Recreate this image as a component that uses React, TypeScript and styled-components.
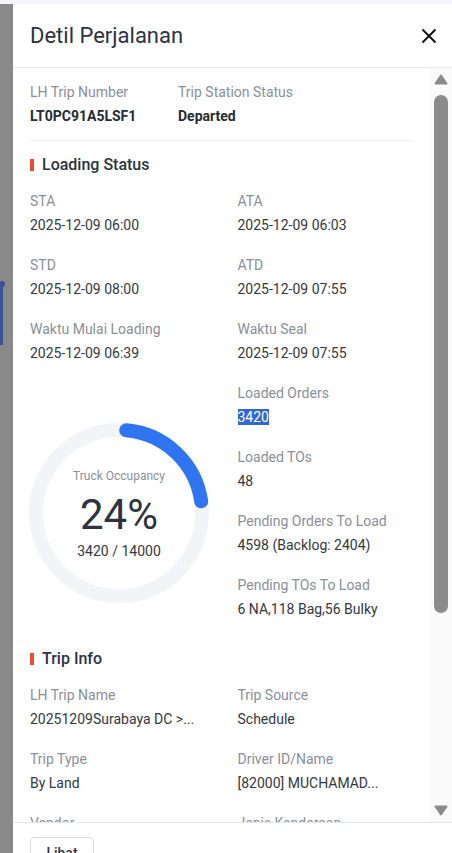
import React from 'react';
import styled, { createGlobalStyle } from 'styled-components';

const GlobalStyle = createGlobalStyle`
  html, body {
    margin: 0;
    padding: 0;
    background: #f4f4f9;
  }

  body {
    font-family: Roboto, "Noto Sans", Arial, sans-serif;
    -webkit-font-smoothing: antialiased;
  }
`

const Page = styled.div`
  width: 452px;
  height: 853px;
  overflow: hidden;
  display: flex;
  flex-direction: column;
`

const TopBand = styled.div`
  height: 4px;
  flex-shrink: 0;
  background: #f4f4f9;
`

const Main = styled.div`
  flex: 1;
  display: flex;
  min-height: 0;
`

// dimmed page behind the drawer
const Backdrop = styled.div`
  width: 13px;
  flex-shrink: 0;
  background: #898989;
  display: flex;
  flex-direction: column;
  padding-top: 277px;
`

const BackdropDot = styled.div`
  width: 6px;
  height: 6px;
  margin-left: -1px;
  border-radius: 50%;
  background: #3b5298;
`

const BackdropBar = styled.div`
  width: 3px;
  height: 58px;
  background: #3b5298;
`

const Drawer = styled.div`
  flex: 1;
  display: flex;
  flex-direction: column;
  background: #ffffff;
  min-width: 0;
`

const Header = styled.div`
  height: 64px;
  box-sizing: border-box;
  flex-shrink: 0;
  display: flex;
  align-items: center;
  justify-content: space-between;
  padding: 0 15px 0 17px;
  border-bottom: 1px solid #e8e9ef;
`

const Title = styled.h1`
  margin: 0;
  font-size: 22px;
  font-weight: 400;
  color: #2c3341;
  letter-spacing: 0;
`

const CloseButton = styled.button`
  width: 16px;
  height: 16px;
  padding: 0;
  border: none;
  background: none;
  display: flex;
  align-items: center;
  justify-content: center;
  cursor: pointer;
`

const Body = styled.div`
  height: 754px;
  flex-shrink: 0;
  display: flex;
  overflow: hidden;
`

const Content = styled.div`
  flex: 1;
  padding: 0 17px;
  overflow: hidden;
`

const TopInfo = styled.div`
  display: grid;
  grid-template-columns: 148px 1fr;
  padding: 13px 0;
  border-bottom: 1px solid #eef0f4;
`

const Section = styled.section<{ top: number }>`
  padding-top: ${p => p.top}px;
`

const SectionTitle = styled.h2`
  margin: 0 0 13px;
  display: flex;
  align-items: center;
  gap: 8px;
  font-size: 16px;
  line-height: 24px;
  font-weight: 500;
  color: #2c3341;

  &::before {
    content: '';
    width: 4px;
    height: 12px;
    background: #ee4d2d;
  }
`

const Grid = styled.div`
  display: grid;
  grid-template-columns: minmax(0, 1fr) minmax(0, 1fr);
  column-gap: 32px;
  row-gap: 18px;
`

const Field = styled.div<{ side?: boolean }>`
  min-width: 0;
  grid-column: ${p => (p.side ? '2' : 'auto')};
`

const Label = styled.div`
  font-size: 14px;
  line-height: 22px;
  color: #8a8f99;
  white-space: nowrap;
`

const Value = styled.div<{ bold?: boolean }>`
  margin-top: 2px;
  font-size: 14px;
  line-height: 22px;
  color: ${p => (p.bold ? '#262b35' : '#333840')};
  font-weight: ${p => (p.bold ? 700 : 400)};
  white-space: nowrap;
`

const Selected = styled.span`
  background: #3467d6;
  color: #ffffff;
`

const ChartCell = styled.div`
  grid-column: 1;
  grid-row: span 4;
  padding-top: 41px;
`

const Gauge = styled.div`
  position: relative;
  width: 180px;
  height: 180px;
  margin-left: -1px;

  & > svg {
    position: absolute;
    inset: 0;
  }
`

const GaugeText = styled.div`
  position: relative;
  display: flex;
  flex-direction: column;
  align-items: center;
  padding-top: 45px;
`

const GaugeLabel = styled.div`
  font-size: 12px;
  line-height: 16px;
  color: #8a8f99;
`

const GaugePercent = styled.div`
  margin-top: 7px;
  font-size: 42px;
  line-height: 48px;
  color: #2c3341;
`

const GaugeSub = styled.div`
  margin-top: 2px;
  font-size: 14px;
  line-height: 20px;
  color: #333840;
`

const ScrollTrack = styled.div`
  width: 22px;
  flex-shrink: 0;
  background: #fafafa;
  display: flex;
  flex-direction: column;
  align-items: flex-start;
  padding: 6px 0 6px 4px;
  box-sizing: border-box;
`

const Thumb = styled.div`
  width: 14px;
  height: 518px;
  margin-top: 10px;
  border-radius: 7px;
  background: #8b8b8b;
`

const Spacer = styled.div`
  flex: 1;
`

const Footer = styled.div`
  flex-shrink: 0;
  border-top: 1px solid #e4e6ec;
  padding: 14px 17px;
`

const Button = styled.button`
  width: 64px;
  height: 32px;
  border: 1px solid #d9dce2;
  border-radius: 4px;
  background: #ffffff;
  font-family: inherit;
  font-size: 14px;
  font-weight: 500;
  color: #333840;
`

const Arrow = ({ down }: { down?: boolean }) => (
  <svg width="14" height="11" viewBox="0 0 14 11">
    <polygon
      points={down ? '1.5,1.5 12.5,1.5 7,9.5' : '1.5,9.5 12.5,9.5 7,1.5'}
      fill="#8b8b8b"
      stroke="#8b8b8b"
      strokeWidth="2"
      strokeLinejoin="round"
    />
  </svg>
)

const CloseIcon = () => (
  <svg width="16" height="16" viewBox="0 0 16 16">
    <path d="M1.5 1.5 L14.5 14.5 M14.5 1.5 L1.5 14.5" stroke="#111" strokeWidth="2" />
  </svg>
)

const OccupancyGauge = ({ loaded, total }: { loaded: number; total: number }) => {
  const r = 83;
  const circ = 2 * Math.PI * r;
  const pct = Math.round((loaded / total) * 100);
  // arc drawn a bit short so the round caps land where the reference shows them
  const arc = (pct / 100) * circ - 14;
  return (
    <Gauge>
      <svg width="180" height="180" viewBox="0 0 180 180">
        <circle cx="90" cy="90" r={r} fill="none" stroke="#f3f4f8" strokeWidth="14" />
        <circle
          cx="90"
          cy="90"
          r={r}
          fill="none"
          stroke="#2f74f0"
          strokeWidth="14"
          strokeLinecap="round"
          strokeDasharray={`${arc} ${circ}`}
          transform="rotate(-85 90 90)"
        />
      </svg>
      <GaugeText>
        <GaugeLabel>Truck Occupancy</GaugeLabel>
        <GaugePercent>{pct}%</GaugePercent>
        <GaugeSub>{loaded} / {total}</GaugeSub>
      </GaugeText>
    </Gauge>
  )
}

const timeFields = [
  ['STA', '2025-12-09 06:00'],
  ['ATA', '2025-12-09 06:03'],
  ['STD', '2025-12-09 08:00'],
  ['ATD', '2025-12-09 07:55'],
  ['Waktu Mulai Loading', '2025-12-09 06:39'],
  ['Waktu Seal', '2025-12-09 07:55'],
];

const loadFields: [string, React.ReactNode][] = [
  ['Loaded Orders', <Selected>3420</Selected>],
  ['Loaded TOs', '48'],
  ['Pending Orders To Load', '4598 (Backlog: 2404)'],
  ['Pending TOs To Load', '6 NA,118 Bag,56 Bulky'],
];

const tripFields = [
  ['LH Trip Name', '20251209Surabaya DC >...'],
  ['Trip Source', 'Schedule'],
  ['Trip Type', 'By Land'],
  ['Driver ID/Name', '[82000] MUCHAMAD...'],
  ['Vendor', '-'],
  ['Jenis Kendaraan', '-'],
];

const App = () => {
  return (
    <>
      <GlobalStyle />
      <Page>
        <TopBand />
        <Main>
          <Backdrop>
            <BackdropDot />
            <BackdropBar />
          </Backdrop>

          <Drawer>
            <Header>
              <Title>Detil Perjalanan</Title>
              <CloseButton aria-label="close">
                <CloseIcon />
              </CloseButton>
            </Header>

            <Body>
              <Content>
                <TopInfo>
                  <Field>
                    <Label>LH Trip Number</Label>
                    <Value bold>LT0PC91A5LSF1</Value>
                  </Field>
                  <Field>
                    <Label>Trip Station Status</Label>
                    <Value bold>Departed</Value>
                  </Field>
                </TopInfo>

                <Section top={12}>
                  <SectionTitle>Loading Status</SectionTitle>
                  <Grid>
                    {timeFields.map(([label, value]) => (
                      <Field key={label}>
                        <Label>{label}</Label>
                        <Value>{value}</Value>
                      </Field>
                    ))}
                    <ChartCell>
                      <OccupancyGauge loaded={3420} total={14000} />
                    </ChartCell>
                    {loadFields.map(([label, value]) => (
                      <Field side key={label}>
                        <Label>{label}</Label>
                        <Value>{value}</Value>
                      </Field>
                    ))}
                  </Grid>
                </Section>

                <Section top={27}>
                  <SectionTitle>Trip Info</SectionTitle>
                  <Grid>
                    {tripFields.map(([label, value]) => (
                      <Field key={label}>
                        <Label>{label}</Label>
                        <Value>{value}</Value>
                      </Field>
                    ))}
                  </Grid>
                </Section>
              </Content>

              <ScrollTrack>
                <Arrow />
                <Thumb />
                <Spacer />
                <Arrow down />
              </ScrollTrack>
            </Body>

            <Footer>
              <Button>Lihat</Button>
            </Footer>
          </Drawer>
        </Main>
      </Page>
    </>
  )
}

export default App;
